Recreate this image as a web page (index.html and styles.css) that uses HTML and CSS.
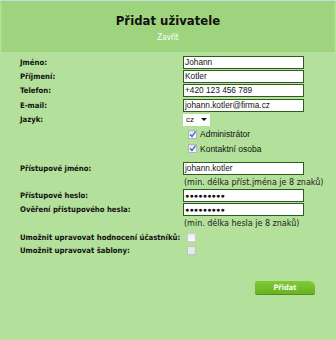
FILE: index.html
```html
<!DOCTYPE html>
<html>
<head>
<meta charset="utf-8">
<link rel="stylesheet" href="styles.css">
</head>
<body>
<div class="page">
  <div class="header">
    <h1 class="title">Přidat uživatele</h1>
    <a class="close">Zavřít</a>
  </div>
  <div class="form">
    <div class="row"><span class="label">Jméno:</span><span class="input">Johann</span></div>
    <div class="row"><span class="label">Příjmení:</span><span class="input">Kotler</span></div>
    <div class="row"><span class="label">Telefon:</span><span class="input">+420 123 456 789</span></div>
    <div class="row"><span class="label">E-mail:</span><span class="input">johann.kotler@firma.cz</span></div>
    <div class="row"><span class="label">Jazyk:</span><span class="select">cz<span class="caret"></span></span></div>
    <div class="row"><span class="label"></span><span class="check on"><span class="box"><svg viewBox="0 0 9 9" width="9" height="9"><path d="M2 4.5 L4 6.5 L7.5 1.5" fill="none" stroke="#3b5aa8" stroke-width="1.3"/></svg></span>Administrátor</span></div>
    <div class="row"><span class="label"></span><span class="check on"><span class="box"><svg viewBox="0 0 9 9" width="9" height="9"><path d="M2 4.5 L4 6.5 L7.5 1.5" fill="none" stroke="#3b5aa8" stroke-width="1.3"/></svg></span>Kontaktní osoba</span></div>
    <div class="gap"></div>
    <div class="row sm"><span class="label">Přístupové jméno:</span><span class="input">johann.kotler</span></div>
    <div class="row sm"><span class="label"></span><span class="hint">(min. délka příst.jména je 8 znaků)</span></div>
    <div class="row sm"><span class="label">Přístupové heslo:</span><span class="input pw">●●●●●●●●●</span></div>
    <div class="row sm"><span class="label">Ověření přístupového hesla:</span><span class="input pw">●●●●●●●●●</span></div>
    <div class="row sm"><span class="label"></span><span class="hint">(min. délka hesla je 8 znaků)</span></div>
    <div class="row sm"><span class="label">Umožnit upravovat hodnocení účastníků:</span><span class="cb"></span></div>
    <div class="row sm"><span class="label">Umožnit upravovat šablony:</span><span class="cb dis"></span></div>
    <div class="actions"><span class="button">Přidat</span></div>
  </div>
</div>
</body>
</html>
```
FILE: styles.css
```css
* { box-sizing: border-box; }
html, body { margin: 0; padding: 0; }
body { background: #b3e09a; width: 336px; height: 340px; overflow: hidden; }
.page { border-top: 1px solid #c6dbe6; }
.header {
  background: #9fd47e;
  height: 51px;
  margin: 0 1px;
  border-left: 1px solid #a8d98a;
  border-right: 1px solid #a8d98a;
  text-align: center;
  padding-top: 12px;
}
.title {
  margin: 0;
  font-family: "DejaVu Sans Condensed", "DejaVu Sans", sans-serif;
  font-weight: bold;
  font-size: 13px;
  line-height: 16px;
  color: #111;
}
.close {
  display: block;
  margin-top: 4px;
  font-family: "DejaVu Sans Condensed", "DejaVu Sans", sans-serif;
  font-size: 8px;
  line-height: 10px;
  color: #ffffff;
}
.form { padding: 3px 0 0 20px; }
.row {
  display: grid;
  grid-template-columns: 163px auto;
  align-items: center;
  height: 14.4px;
}
.row.sm { height: 13.7px; }
.label {
  font-family: "DejaVu Sans Condensed", "DejaVu Sans", sans-serif;
  font-weight: bold;
  font-size: 7.7px;
  color: #111;
  white-space: nowrap;
}
.input {
  display: block;
  width: 121px;
  height: 13px;
  background: #fff;
  border: 1px solid #2d5c1c;
  font-family: "Liberation Sans", Arial, sans-serif;
  font-size: 8.3px;
  line-height: 11px;
  padding-left: 1px;
  color: #111;
  white-space: nowrap;
  overflow: hidden;
}
.input.pw { font-size: 7px; letter-spacing: 0.2px; padding-left: 1px; }
.select {
  display: flex;
  align-items: center;
  width: 27px;
  height: 12px;
  background: #fff;
  font-family: "Liberation Sans", Arial, sans-serif;
  font-size: 8px;
  padding-left: 3px;
  color: #111;
}
.caret {
  margin-left: 7px;
  width: 0; height: 0;
  border-left: 3px solid transparent;
  border-right: 3px solid transparent;
  border-top: 3px solid #111;
}
.check {
  display: flex;
  align-items: center;
  font-family: "Liberation Sans", Arial, sans-serif;
  font-size: 8.5px;
  color: #111;
  padding-left: 5px;
}
.box {
  width: 9px; height: 9px;
  border: 1px solid #a9b7c4;
  background: linear-gradient(#dfe3e8, #f8f9fa);
  margin-right: 3px;
  display: flex;
}
.box svg { margin: -1px; }
.gap { height: 6px; }
.hint {
  font-family: "DejaVu Sans", sans-serif;
  font-size: 8px;
  color: #222;
  padding-left: 1px;
  white-space: nowrap;
}
.cb {
  display: block;
  width: 9px; height: 9px;
  margin-left: 4px;
  border: 1px solid #c8ced4;
  background: linear-gradient(#e9ecef, #fbfbfb);
}
.cb.dis { border-color: #bcc4ca; background: #e6e9ea; }
.actions { display: flex; justify-content: flex-end; padding: 23px 21px 0 0; }
.button {
  display: block;
  width: 60px;
  height: 14px;
  background: linear-gradient(#82c93a, #68b320);
  border-radius: 2px 6px 2px 2px;
  border-bottom: 1px solid #4f8f1a;
  text-align: center;
  font-family: "DejaVu Sans Condensed", "DejaVu Sans", sans-serif;
  font-weight: bold;
  font-size: 7.5px;
  line-height: 13px;
  color: #f2ffe8;
}
```
